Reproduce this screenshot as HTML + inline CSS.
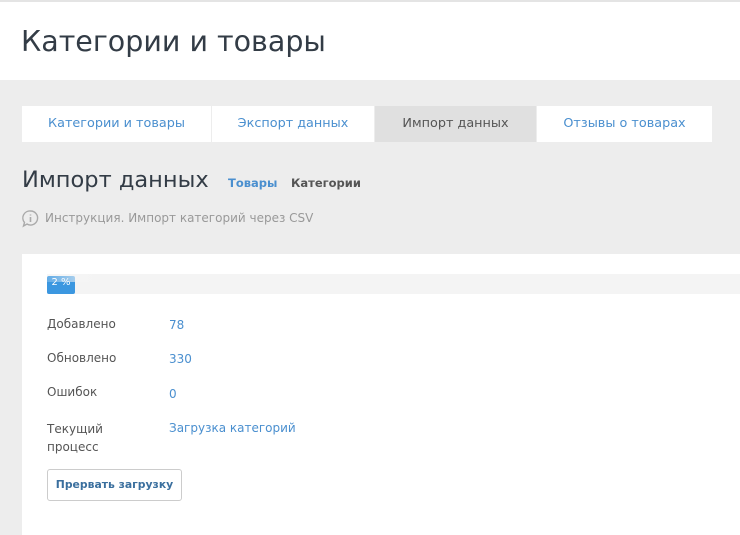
<!DOCTYPE html><html><head><style>
body{margin:0;width:740px;height:535px;overflow:hidden;background:#ededed;font-family:"DejaVu Sans",sans-serif;position:relative}
.hdr{position:absolute;left:0;top:0;width:740px;height:80px;background:#fff;border-top:2px solid #e4e4e4;box-sizing:border-box}
.hdr h1{margin:0;position:absolute;left:21px;top:23px;font-size:28.5px;font-weight:normal;color:#333c46}
.tab{position:absolute;top:106px;height:36px;background:#fff;color:#4a8fcf;font-size:12.8px;line-height:36px;text-align:center}
.t{position:absolute;font-size:12px}
</style></head><body>
<div class="hdr"><h1>Категории и товары</h1></div>
<div class="tab" style="left:22px;width:189px">Категории и товары</div>
<div class="tab" style="left:212px;width:162px">Экспорт данных</div>
<div class="tab" style="left:375px;width:161px;background:#e0e0e0;color:#555">Импорт данных</div>
<div class="tab" style="left:537px;width:175px">Отзывы о товарах</div>
<div class="t" style="left:22px;top:167px;font-size:22.5px;color:#333c46">Импорт данных</div>
<div class="t" style="left:228px;top:176px;color:#4a8fcf;font-weight:bold;font-size:11.5px">Товары</div>
<div class="t" style="left:291px;top:176px;color:#555;font-weight:bold;font-size:11.5px">Категории</div>
<svg style="position:absolute;left:21px;top:209px" width="19" height="19" viewBox="0 0 19 19"><path d="M9.5 2a7 7 0 1 1-3.5 13l-3.5 2 1-3.5A7 7 0 0 1 9.5 2z" fill="none" stroke="#aaa" stroke-width="1.4"/><path d="M9.5 8v5M9.5 5.5v1" stroke="#aaa" stroke-width="1.6"/></svg>
<div class="t" style="left:45px;top:211px;color:#999">Инструкция. Импорт категорий через CSV</div>
<div style="position:absolute;left:22px;top:254px;width:718px;height:281px;background:#fff"></div>
<div style="position:absolute;left:47px;top:274px;width:693px;height:20px;background:#f4f4f4"></div>
<div style="position:absolute;left:47px;top:276px;width:28px;height:18px;background:#3b97e0;border-radius:2px;color:#fff;font-size:10px;line-height:14px;text-align:center">2 %</div>
<div style="position:absolute;left:47px;top:274px;width:60px;height:8px;background:linear-gradient(90deg,rgba(255,255,255,.2),#f4f4f4)"></div>
<div class="t" style="left:47px;top:317px;color:#555">Добавлено</div><div class="t" style="left:169px;top:318px;color:#4a8fcf">78</div>
<div class="t" style="left:47px;top:351px;color:#555">Обновлено</div><div class="t" style="left:169px;top:352px;color:#4a8fcf">330</div>
<div class="t" style="left:47px;top:385px;color:#555">Ошибок</div><div class="t" style="left:169px;top:387px;color:#4a8fcf">0</div>
<div class="t" style="left:47px;top:420px;color:#555;line-height:18px">Текущий<br>процесс</div><div class="t" style="left:169px;top:421px;color:#4a8fcf">Загрузка категорий</div>
<div style="position:absolute;left:47px;top:469px;width:133px;height:30px;border:1px solid #ccc;border-radius:3px;color:#3a6f9e;font-weight:bold;font-size:10.8px;line-height:30px;text-align:center">Прервать загрузку</div>
</body></html>
